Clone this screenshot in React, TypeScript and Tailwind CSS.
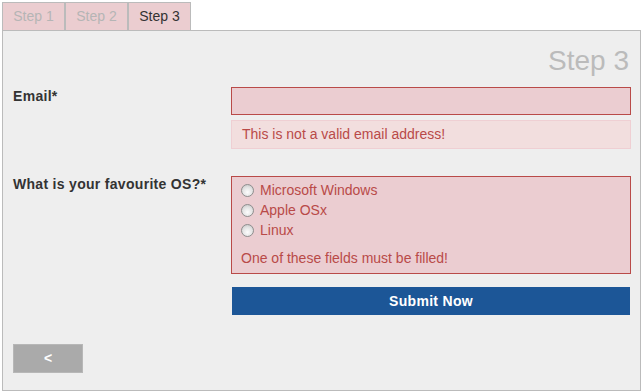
import React from "react";

const tabs = [
  { label: "Step 1", active: false },
  { label: "Step 2", active: false },
  { label: "Step 3", active: true },
];

const options = ["Microsoft Windows", "Apple OSx", "Linux"];

const Radio: React.FC = () => (
  <span className="inline-block w-[13px] h-[13px] rounded-full border border-[#8e8e8e] bg-[radial-gradient(circle_at_50%_65%,#fdfdfd_0%,#e2e2e2_55%,#bdbdbd_100%)] shrink-0" />
);

const App: React.FC = () => {
  return (
    <div className="w-[643px] h-[391px] bg-white px-[2px] pt-[2px] font-['Liberation_Sans',Arial,sans-serif] text-[14px] text-[#333]">
      {/* Tabs */}
      <div className="flex h-[28px]">
        {tabs.map((t) => (
          <div
            key={t.label}
            className={
              t.active
                ? "w-[63px] h-[28px] border border-b-0 border-[#bbbbbb] bg-[#ebcdd0] text-[#333] flex items-center justify-center"
                : "w-[63px] h-[28px] border border-b-0 border-[#bbbbbb] bg-[#ebcdd0] text-[#b5b5b5] flex items-center justify-center"
            }
          >
            {t.label}
          </div>
        ))}
      </div>

      {/* Panel */}
      <div className="h-[361px] border border-[#bbbbbb] bg-[#eeeeee] pl-[10px] pr-[9px]">
        <div className="mt-[14px] h-[32px] leading-[32px] text-right text-[28px] text-[#bbbbbb] pr-[2px]">
          Step 3
        </div>

        {/* Email row */}
        <div className="mt-[10px] flex">
          <div className="w-[218px] font-bold leading-[18px] tracking-[0.3px]">Email*</div>
          <div className="w-[400px]">
            <div className="h-[28px] border border-[#b94a48] bg-[#ebcdd1]" />
            <div className="mt-[5px] h-[29px] border border-[#efcfd3] bg-[#f2dede] text-[#b94a48] pl-[10px] flex items-center">
              This is not a valid email address!
            </div>
          </div>
        </div>

        {/* OS row */}
        <div className="mt-[27px] flex">
          <div className="w-[218px] font-bold leading-[16px] tracking-[0.3px]">What is your favourite OS?*</div>
          <div className="w-[400px]">
            <div className="h-[98px] border border-[#b94a48] bg-[#ebcdd1] pl-[9px] pt-[3px] text-[#b94a48]">
              {options.map((o) => (
                <div key={o} className="flex items-center h-[20px] leading-[20px]">
                  <Radio />
                  <span className="ml-[6px]">{o}</span>
                </div>
              ))}
              <div className="mt-[8px] leading-[20px]">One of these fields must be filled!</div>
            </div>
            <div className="mt-[13px] mx-[1px] h-[28px] bg-[#1c5697] text-white font-bold tracking-[0.3px] flex items-center justify-center">
              Submit Now
            </div>
          </div>
        </div>

        {/* Back */}
        <div className="mt-[29px] w-[70px] h-[29px] border border-[#b7b7b7] bg-[#aaaaaa] text-white font-bold flex items-center justify-center">
          &lt;
        </div>
      </div>
    </div>
  );
};

export default App;
